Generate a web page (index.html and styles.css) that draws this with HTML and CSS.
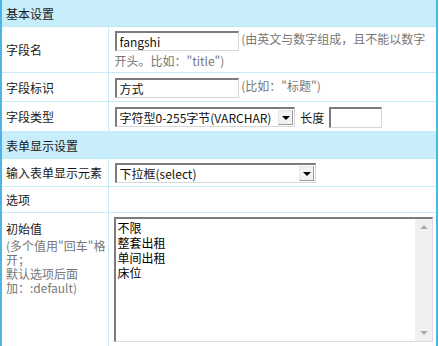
FILE: index.html
```html
<!DOCTYPE html>
<html lang="zh-CN">
<head>
    <meta charset="UTF-8">
    <title>字段设置</title>
    <link rel="stylesheet" href="styles.css">
</head>
<body>
    <table class="form-table">
        <colgroup>
            <col class="col-label">
            <col>
        </colgroup>
        <tr class="head"><th colspan="2">基本设置</th></tr>
        <tr class="row-name">
            <td class="label">字段名</td>
            <td class="field"><input type="text" class="text" value="fangshi"> <span class="tip">(由英文与数字组成，且不能以数字开头。比如："title")</span></td>
        </tr>
        <tr class="row-title">
            <td class="label">字段标识</td>
            <td class="field"><input type="text" class="text" value="方式"> <span class="tip">(比如："标题")</span></td>
        </tr>
        <tr class="row-type">
            <td class="label">字段类型</td>
            <td class="field">
                <span class="select select-type"><span class="select-text">字符型0-255字节(VARCHAR)</span><span class="select-arrow"></span></span>
                <span class="len-label">长度</span>
                <input type="text" class="text text-short" value="">
            </td>
        </tr>
        <tr class="head head-2"><th colspan="2">表单显示设置</th></tr>
        <tr class="row-element">
            <td class="label">输入表单显示元素</td>
            <td class="field">
                <span class="select select-wide"><span class="select-text">下拉框(select)</span><span class="select-arrow"></span></span>
            </td>
        </tr>
        <tr class="row-options">
            <td class="label">选项</td>
            <td class="field"></td>
        </tr>
        <tr class="row-default">
            <td class="label label-top">初始值<div class="tip">(多个值用"回车"格开；<br>默认选项后面加：:default)</div></td>
            <td class="field field-top">
                <div class="area">
                    <textarea class="area-text">不限
整套出租
单间出租
床位</textarea>
                    <div class="scrollbar"><span class="arrow-up"></span><span class="arrow-down"></span></div>
                </div>
            </td>
        </tr>
    </table>
</body>
</html>
```

FILE: styles.css
```css
body {
    margin: 0;
    font-family: "Noto Sans CJK SC", "Microsoft YaHei", sans-serif;
    font-size: 12px;
    color: #1a1a1a;
}
.form-table {
    width: 438px;
    table-layout: fixed;
    border-collapse: collapse;
    border-left: 2px solid #4cb5e5;
    border-right: 2px solid #4cb5e5;
}
.col-label {
    width: 107px;
}
.form-table th {
    background-color: #c8eefb;
    text-align: left;
    font-weight: normal;
    height: 26px;
    padding: 0 0 0 4px;
    border-bottom: 1px solid #bde8f6;
}
.form-table td {
    padding: 0 6px 0 6px;
    border-bottom: 1px solid #c6ecf8;
    vertical-align: middle;
}
.form-table .label {
    padding: 0 0 0 4px;
    border-right: 1px solid #c6ecf8;
}
.row-name td { height: 45px; }
.row-title td { height: 28px; }
.row-type td { height: 29px; }
.head-2 th { height: 26px; }
.row-element td { height: 27px; }
.row-options td { height: 25px; }
.row-default td { height: 130px; }
.field {
    line-height: 19px;
}
.tip {
    color: #777;
}
.text {
    width: 124px;
    height: 20px;
    box-sizing: border-box;
    margin: 0;
    padding: 0 3px;
    font-family: inherit;
    font-size: 12px;
    color: #111;
    vertical-align: middle;
    border-style: solid;
    border-width: 2px 1px 1px 2px;
    border-color: #7c7c7c #d6d6d6 #d6d6d6 #7c7c7c;
}
.text-short {
    width: 53px;
    height: 21px;
}
.select {
    display: inline-flex;
    align-items: center;
    height: 20px;
    box-sizing: border-box;
    vertical-align: middle;
    border-style: solid;
    border-width: 2px 1px 1px 2px;
    border-color: #7c7c7c #d6d6d6 #d6d6d6 #7c7c7c;
    background: #fff;
    color: #111;
}
.select-type { width: 180px; }
.select-wide { width: 201px; }
.select-text {
    flex: 1;
    padding-left: 3px;
    white-space: nowrap;
    overflow: hidden;
}
.select-arrow {
    position: relative;
    width: 15px;
    height: 15px;
    margin-right: 1px;
    box-sizing: border-box;
    border: 1px solid #9a9a9a;
    border-top-color: #e6e6e6;
    border-left-color: #e6e6e6;
    background: #f2f2f2;
}
.select-arrow::after {
    content: "";
    position: absolute;
    left: 3px;
    top: 5px;
    border-left: 4px solid transparent;
    border-right: 4px solid transparent;
    border-top: 4px solid #000;
}
.len-label {
    margin: 0 2px 0 3px;
    vertical-align: middle;
}
.form-table .field-top {
    vertical-align: top;
    padding-top: 4px;
}
.form-table .label-top {
    vertical-align: top;
    line-height: 14px;
    padding-top: 9px;
}
.label-top .tip {
    margin-top: 3px;
}
.area {
    display: flex;
    width: 319px;
    height: 125px;
    box-sizing: border-box;
    margin-left: -1px;
    border-style: solid;
    border-width: 2px 1px 1px 2px;
    border-color: #7c7c7c #dcdcdc #dcdcdc #7c7c7c;
}
.area-text {
    flex: 1;
    border: none;
    resize: none;
    outline: none;
    margin: 0;
    padding: 1px 2px;
    font-family: inherit;
    font-size: 12px;
    line-height: 15px;
    color: #000;
    overflow: hidden;
}
.scrollbar {
    position: relative;
    width: 17px;
    background: #f0f0f0;
}
.arrow-up,
.arrow-down {
    position: absolute;
    left: 5px;
    border-left: 4px solid transparent;
    border-right: 4px solid transparent;
}
.arrow-up {
    top: 6px;
    border-bottom: 4px solid #a8a8a8;
}
.arrow-down {
    bottom: 6px;
    border-top: 4px solid #a8a8a8;
}
```
